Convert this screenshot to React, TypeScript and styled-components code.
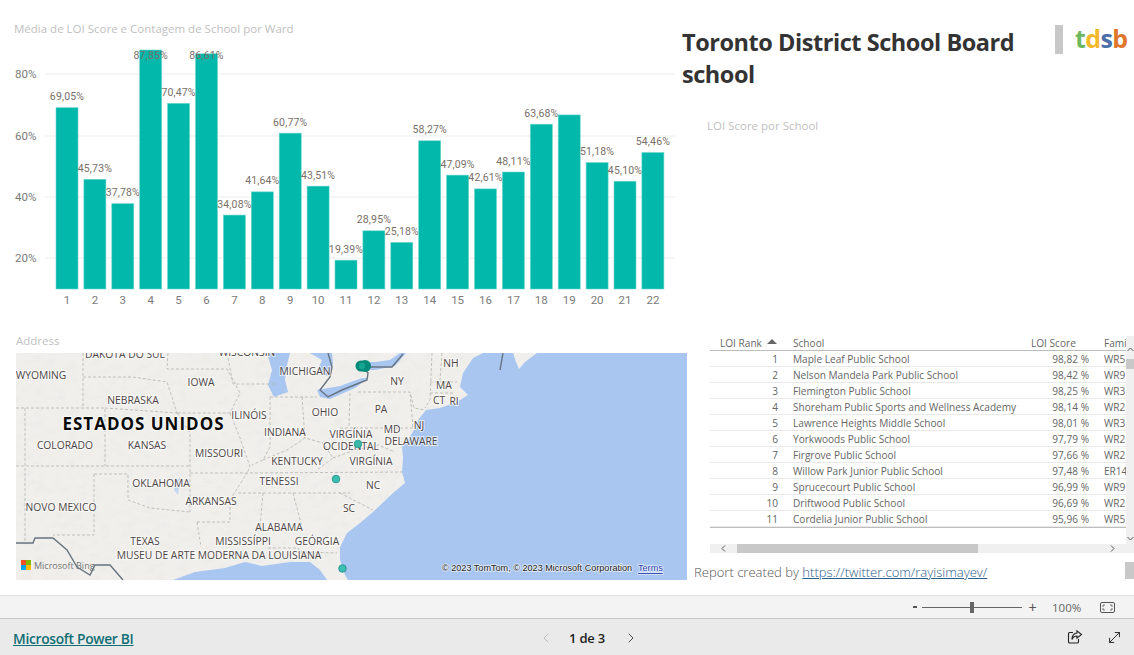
import React from "react";
import styled, { createGlobalStyle } from "styled-components";
import { ChevronLeft, ChevronRight, MoveDiagonal } from "lucide-react";

const Global = createGlobalStyle`
  html, body { margin: 0; padding: 0; background: #fff; overflow: hidden; }
  * { box-sizing: border-box; }
  body { font-family: "Open Sans", "Noto Sans", sans-serif; }
`;

const Page = styled.div`
  width: 1134px; height: 655px; display: flex; flex-direction: column; background: #fff;
`;
const Report = styled.main`height: 595px; display: flex; flex-direction: column;`;
const TopRow = styled.section`height: 330px; display: flex;`;
const BottomRow = styled.section`height: 265px; display: flex;`;
const ChartPanel = styled.div`width: 676px; display: flex; flex-direction: column;`;
const VisualTitle = styled.div<{ $pad: number; $h: number }>`
  height: ${p => p.$h}px; padding-left: ${p => p.$pad}px; display: flex; align-items: flex-end;
  font-size: 11.5px; line-height: 16px; color: #bfbfbf; white-space: nowrap;
`;
const ChartBoxWrap = styled.div`height: 293px; padding-top: 3px;`;
const ChartSvg = styled.svg`display: block; width: 676px; height: 290px;`;
const Grid = styled.line`stroke: #eeeeee; stroke-width: 1.2;`;
const Bar = styled.rect`fill: #01b8aa; stroke: #6ad6cd; stroke-width: .6;`;
const AxisText = styled.text`
  font-family: "Roboto", sans-serif; font-size: 11.5px; fill: #7b7b7b; dominant-baseline: central;
`;
const DataLabel = styled.text`
  font-family: "Roboto", sans-serif; font-size: 10.5px; letter-spacing: .15px; fill: #796f69;
  text-anchor: middle; dominant-baseline: central;
`;

const SidePanel = styled.div`flex: 1; padding-left: 6px; display: flex; flex-direction: column;`;
const Header = styled.div`display: flex; height: 88px; padding-top: 26px;`;
const Title = styled.h1`
  margin: 0; width: 373px; font-size: 23.5px; line-height: 32px; font-weight: 700; color: #333;
  letter-spacing: -.45px;
`;
const Divider = styled.div`width: 8px; height: 29px; margin-top: -1px; background: #c8c8c8;`;
const Logo = styled.div`
  margin-left: 12px; margin-top: -5px; font-size: 25px; line-height: 34px; font-weight: 700; letter-spacing: -.6px;
`;
const LogoLetter = styled.span<{ $c: string }>`color: ${p => p.$c};`;

const MapColumn = styled.div`width: 690px; display: flex; flex-direction: column;`;
const MapGap = styled.div`height: 4px;`;
const MapSvg = styled.svg`display: block; width: 671px; height: 227px; margin-left: 16px;`;
const State = styled.path`fill: none; stroke: #b4b4af; stroke-width: .8; stroke-dasharray: 3 2;`;
const Border = styled.path`fill: none; stroke: #677380; stroke-width: 1.4;`;
const MapLabel = styled.text`
  font-family: "Open Sans", sans-serif; font-size: 10.3px; fill: #4d4545; text-anchor: middle; dominant-baseline: central;
  paint-order: stroke; stroke: rgba(255,255,255,.65); stroke-width: 2px;
`;
const CountryLabel = styled(MapLabel)`
  font-size: 17px; font-weight: 700; fill: #0a0a0a; letter-spacing: 1px; stroke: rgba(255,255,255,.7);
`;
const Attribution = styled.text`
  font-family: "Liberation Sans", sans-serif; font-size: 9.1px; fill: #222; dominant-baseline: central;
  paint-order: stroke; stroke: rgba(255,255,255,.7); stroke-width: 1.5px;
`;
const TermsLabel = styled(Attribution)`fill: #2a3fb0; text-decoration: underline;`;
const BingLabel = styled.text`
  font-family: "Open Sans", sans-serif; font-size: 9px; fill: #777; dominant-baseline: central;
`;

const TableColumn = styled.div`flex: 1; padding-top: 6px; display: flex; flex-direction: column;`;
const TableArea = styled.div`display: flex; height: 217px; padding-left: 20px;`;
const TableBody = styled.div`width: 416px; display: flex; flex-direction: column;`;
const Rows = styled.div`height: 177px; border-bottom: 1px solid #bdbdbd; overflow: hidden;`;
const RowGrid = styled.div<{ $head?: boolean }>`
  display: grid; grid-template-columns: 68px 252px 59px 37px; align-items: center;
  height: ${p => (p.$head ? 15 : 16)}px; padding-top: ${p => (p.$head ? 0 : 1)}px;
  border-bottom: 1px solid ${p => (p.$head ? "#bdbdbd" : "#e9e9e9")};
  font-size: 10.1px; line-height: 14px; color: #666; white-space: nowrap;
`;
const RankCell = styled.div`text-align: right;`;
const RankHead = styled.div`padding-left: 10px; display: flex; align-items: center; gap: 5px;`;
const SortArrow = styled.span`
  display: block; width: 0; height: 0; margin-top: -4px;
  border-left: 5px solid transparent; border-right: 5px solid transparent; border-bottom: 5px solid #666;
`;
const SchoolCell = styled.div`padding-left: 15px; overflow: hidden;`;
const ScoreCell = styled.div`text-align: right;`;
const ScoreHead = styled.div`padding-left: 1px;`;
const FamilyCell = styled.div`padding-left: 15px; overflow: hidden;`;
const HScroll = styled.div`
  margin-top: 16px; height: 9px; background: #f0f0f0; display: flex; align-items: center; color: #555;
`;
const HArrow = styled.div`width: 27px; display: flex; justify-content: center;`;
const HThumb = styled.div`width: 241px; height: 9px; background: #c8c8c8;`;
const HEnd = styled.div`margin-left: auto; width: 27px; display: flex; justify-content: center;`;
const VScroll = styled.div`
  width: 8px; background: #f0f0f0; display: flex; flex-direction: column; align-items: center; color: #555;
  padding-top: 11px;
`;
const VThumb = styled.div`width: 8px; height: 10px; margin-top: 7px; background: #c8c8c8;`;
const VEnd = styled.div`margin-top: 155px;`;
const NoteRow = styled.div`
  margin-top: 9px; height: 20px; padding-left: 4px; display: flex; justify-content: space-between; align-items: flex-start;
`;
const Note = styled.div`font-size: 13.05px; font-weight: 300; line-height: 21px; color: #555;`;
const NoteLink = styled.a`color: #2b5e8c; text-decoration: underline;`;
const NoteBlock = styled.div`width: 9px; height: 17px; background: #c8c8c8;`;

const ZoomBar = styled.div`
  height: 24px; background: #f3f3f3; border-top: 1px solid #e1e1e1; border-bottom: 1px solid #c8c8c8;
  display: flex; align-items: center; justify-content: flex-end; padding-right: 19px; color: #555; font-size: 11.5px;
`;
const ZoomMinus = styled.div`width: 4px; height: 2px; background: #555;`;
const Slider = styled.div`
  width: 100px; height: 1px; margin: 0 6px 0 5px; background: #666; display: flex; align-items: center; justify-content: center;
`;
const SliderThumb = styled.div`width: 4px; height: 11px; background: #666;`;
const ZoomPlus = styled.div`font-size: 14px; line-height: 14px; width: 9px; text-align: center; font-family: "Liberation Sans", sans-serif;`;
const ZoomValue = styled.div`margin-left: 15px; width: 33px; color: #666;`;
const FitIcon = styled.svg`margin-left: 15px; display: block;`;

const Footer = styled.footer`
  height: 36px; background: #eaeaea; display: flex; align-items: center; padding: 2px 11px 0 13px;
`;
const BrandLink = styled.a`
  width: 121px; font-size: 13.8px; font-weight: 600; letter-spacing: -.3px; color: #0f6f75; text-decoration: underline; white-space: nowrap;
`;
const Pager = styled.div`
  margin-left: 404px; margin-top: -1px; display: flex; align-items: center; color: #222; font-size: 13px; font-weight: 600;
  letter-spacing: -.2px;
`;
const PagerText = styled.span`margin: 0 18px 0 15px; white-space: nowrap;`;
const Actions = styled.div`margin-left: auto; margin-top: -2px; display: flex; align-items: center; gap: 23px; color: #222;`;

const values: (number | null)[] = [69.05,45.73,37.78,87.85,70.47,86.61,34.08,41.64,60.77,43.51,19.39,28.95,25.18,58.27,47.09,42.61,48.11,63.68,null,51.18,45.1,54.46];
const heights = values.map(v => (v === null ? 66.7 : v));
const yOf = (v: number) => 289 - (v - 10) * 3.07;
const fmt = (v: number) => v.toFixed(2).replace(".", ",") + "%";

const rows = [
  ["1","Maple Leaf Public School","98,82 %","WR5"],
  ["2","Nelson Mandela Park Public School","98,42 %","WR9"],
  ["3","Flemington Public School","98,25 %","WR3"],
  ["4","Shoreham Public Sports and Wellness Academy","98,14 %","WR2"],
  ["5","Lawrence Heights Middle School","98,01 %","WR3"],
  ["6","Yorkwoods Public School","97,79 %","WR2"],
  ["7","Firgrove Public School","97,66 %","WR2"],
  ["8","Willow Park Junior Public School","97,48 %","ER14"],
  ["9","Sprucecourt Public School","96,99 %","WR9"],
  ["10","Driftwood Public School","96,69 %","WR2"],
  ["11","Cordelia Junior Public School","95,96 %","WR5"],
];

const labels: [string, number, number][] = [
  ["DAKOTA DO SUL",125,354],["WISCONSIN",247,352],["WYOMING",41,375],["IOWA",201,382],["NEBRASKA",133,400],
  ["MICHIGAN",305,371],["OHIO",325,412],["ILINÓIS",249,415],["INDIANA",285,432],["COLORADO",65,445],["KANSAS",147,445],
  ["MISSOURI",219,453],["KENTUCKY",297,461],["VIRGÍNIA",351,434],["OCIDENTAL",351,446],["MD",392,429],["DELAWARE",411,441],
  ["NJ",419,425],["PA",381,409],["NY",397,381],["NH",451,363],["MA",444,385],["CT",439,400],["RI",454,401],
  ["VIRGÍNIA",371,461],["OKLAHOMA",161,483],["TENESSI",279,481],["ARKANSAS",211,501],["NC",373,485],["SC",349,508],
  ["NOVO MEXICO",61,507],["ALABAMA",279,527],["TEXAS",145,541],["MISSISSÍPPI",243,541],["GEÓRGIA",317,541],
  ["MUSEU DE ARTE MODERNA DA LOUISIANA",219,555],
];

const statePaths = [
  "M83 353V407","M83 377H133L167 382L177 413","M16 408H105V466","M105 408L177 413",
  "M168 353L167 369H227L240 393L230 413H177","M177 413L190 433V512","M230 413L240 438L250 467L247 473",
  "M16 466H190","M94 474H128V500L150 508L190 512","M190 473H247L402 472","M25 408V543","M94 474V535H53",
  "M197 522H230V500L247 473","M197 522L201 547","M238 493H350","M263 493L260 527","M293 493L302 527",
  "M270 397V447L263 460L252 465","M302 397L305 438","M227 353L233 384H277","M270 397H317",
  "M263 460L287 450L305 438L323 443L333 458L317 470","M358 392H410L414 408L425 410","M350 393L349 427","M340 428H413",
  "M432 353L430 400L425 408","M430 382H457","M430 393H455","M442 353L440 380","M340 493L373 510",
  "M268 548H298L300 552L337 553","M333 458L355 450L378 445L395 452","M413 427L410 392",
];

const coast = "M16 353H483L473 358L463 373L460 387L468 395L457 402L440 408L426 410L418 420L415 428L408 440L402 447L403 458L402 472L405 483L393 493L373 512L360 523L347 533L340 547L340 560L345 575L348 580H327L320 570L310 562L290 562L262 566L245 562L225 568L195 572L173 580H16Z";

const Chart = () => (
  <ChartSvg viewBox="0 40 676 290">
    {[[80,74],[60,136],[40,197],[20,258]].map(([v, y]) => (
      <React.Fragment key={v}>
        <Grid x1={45} x2={675} y1={y} y2={y} />
        <AxisText x={15} y={y}>{v}%</AxisText>
      </React.Fragment>
    ))}
    {heights.map((h, i) => {
      const x = 56 + i * 27.9;
      const top = yOf(h);
      const v = values[i];
      const inside = top < 70;
      return (
        <React.Fragment key={i}>
          <Bar x={x} y={top} width={22} height={289 - top} />
          {v !== null && <DataLabel x={x + 11} y={inside ? 55 : top - 11}>{fmt(v)}</DataLabel>}
          <AxisText x={x + 11} y={300} textAnchor="middle">{i + 1}</AxisText>
        </React.Fragment>
      );
    })}
  </ChartSvg>
);

const USMap = () => (
  <MapSvg viewBox="16 353 671 227">
    <defs>
      <filter id="terrain" x="0" y="0" width="100%" height="100%">
        <feTurbulence type="fractalNoise" baseFrequency="0.09 0.14" numOctaves="3" seed="4" />
        <feColorMatrix values="0 0 0 0 .6  0 0 0 0 .6  0 0 0 0 .58  .9 0 0 0 -.42" />
      </filter>
      <clipPath id="land"><path d={coast} /></clipPath>
    </defs>
    <rect x="16" y="353" width="671" height="227" fill="#a9c6f0" />
    <path fill="#f0efec" d={coast} />
    <g clipPath="url(#land)"><rect x="16" y="353" width="500" height="227" filter="url(#terrain)" opacity=".22" /></g>
    <path fill="#f0efec" d="M513 353H537L525 362L519 369L516 362Z" />
    <path fill="#f0efec" d="M428 408L445 401L450 398L440 405Z" />
    <path fill="#a9c6f0" d="M267 353H290L287 365L285 380L288 392L274 397L268 385L272 370Z" />
    <path fill="#a9c6f0" d="M310 353H332L333 364L327 376L318 370L322 360Z" />
    <path fill="#a9c6f0" d="M317 390L340 386L362 378L368 378L355 388L330 399L320 397Z" />
    <path fill="#a9c6f0" d="M358 362L375 362L390 360L400 353H406L395 366L375 370L358 370Z" />
    <path fill="#a9c6f0" d="M175 480L180 478L178 495L174 490Z" opacity=".6" />
    {statePaths.map(d => <State key={d} d={d} />)}
    <Border d="M328 353L332 367L330 377L320 390L328 397L342 390L367 380L368 373L363 367H392L403 354" />
    <Border d="M503 353L500 370" />
    <Border d="M16 543H33L35 538H53L67 550L77 567L90 575L95 565H110L123 580" />
    {labels.map(([t, x, y], i) => <MapLabel key={i} x={x} y={y}>{t}</MapLabel>)}
    <CountryLabel x={143.5} y={423}>ESTADOS UNIDOS</CountryLabel>
    <circle cx="361" cy="366" r="5.5" fill="#008a77" />
    <circle cx="365" cy="366" r="6" fill="#008a77" />
    <circle cx="362" cy="366" r="3.2" fill="#15a693" />
    <circle cx="358" cy="444" r="3.8" fill="#3cb7a9" stroke="#1f9c8d" strokeWidth=".8" />
    <circle cx="336" cy="479" r="3.8" fill="#3cbfb2" stroke="#1a8f85" strokeWidth=".8" />
    <circle cx="342.500" cy="568.500" r="3.8" fill="#3cbfb2" stroke="#1a8f85" strokeWidth=".8" />
    <rect x="21" y="560" width="5" height="5" fill="#f25022" />
    <rect x="26" y="560" width="5" height="5" fill="#7fba00" />
    <rect x="21" y="565" width="5" height="5" fill="#00a4ef" />
    <rect x="26" y="565" width="5" height="5" fill="#ffb900" />
    <BingLabel x={34} y={565}>Microsoft Bing</BingLabel>
    <Attribution x={442} y={568}>© 2023 TomTom, © 2023 Microsoft Corporation</Attribution>
    <TermsLabel x={638} y={568}>Terms</TermsLabel>
  </MapSvg>
);

const TinyUp = () => <svg width="7" height="5" viewBox="0 0 7 5"><path d="M.5 4L3.500 1L6.500 4" fill="none" stroke="currentColor" /></svg>;
const TinyDown = () => <svg width="7" height="5" viewBox="0 0 7 5"><path d="M.5 1L3.500 4L6.500 1" fill="none" stroke="currentColor" /></svg>;
const TinyLeft = () => <svg width="5" height="7" viewBox="0 0 5 7"><path d="M4 .5L1 3.500L4 6.500" fill="none" stroke="currentColor" /></svg>;
const TinyRight = () => <svg width="5" height="7" viewBox="0 0 5 7"><path d="M1 .5L4 3.500L1 6.500" fill="none" stroke="currentColor" /></svg>;

const ShareIcon = () => (
  <svg width="16" height="16" viewBox="0 0 16 16" fill="none" stroke="currentColor" strokeWidth="1.1">
    <path d="M6 3.500H2.800Q1.500 3.500 1.500 4.800V12.700Q1.500 14 2.800 14H10.200Q11.500 14 11.500 12.700V10" />
    <path d="M10 1.800L14.500 5.500L10 9.200V7C7.500 7 6 8 5 10.500C5 6.800 7 4 10 4Z" />
  </svg>
);

export default function App() {
  return (
    <Page>
      <Global />
      <Report>
        <TopRow>
          <ChartPanel>
            <VisualTitle $pad={14} $h={37}>Média de LOI Score e Contagem de School por Ward</VisualTitle>
            <ChartBoxWrap><Chart /></ChartBoxWrap>
          </ChartPanel>
          <SidePanel>
            <Header>
              <Title>Toronto District School Board school</Title>
              <Divider />
              <Logo>
                <LogoLetter $c="#6cb85f">t</LogoLetter>
                <LogoLetter $c="#f2b92c">d</LogoLetter>
                <LogoLetter $c="#4a6ea8">s</LogoLetter>
                <LogoLetter $c="#e0762a">b</LogoLetter>
              </Logo>
            </Header>
            <VisualTitle $pad={25} $h={46}>LOI Score por School</VisualTitle>
          </SidePanel>
        </TopRow>
        <BottomRow>
          <MapColumn>
            <VisualTitle $pad={16} $h={19}>Address</VisualTitle>
            <MapGap />
            <USMap />
          </MapColumn>
          <TableColumn>
            <TableArea>
              <TableBody>
                <RowGrid $head>
                  <RankHead>LOI Rank <SortArrow /></RankHead>
                  <SchoolCell>School</SchoolCell>
                  <ScoreHead>LOI Score</ScoreHead>
                  <FamilyCell>Family</FamilyCell>
                </RowGrid>
                <Rows>
                  {rows.map(r => (
                    <RowGrid key={r[0]}>
                      <RankCell>{r[0]}</RankCell>
                      <SchoolCell>{r[1]}</SchoolCell>
                      <ScoreCell>{r[2]}</ScoreCell>
                      <FamilyCell>{r[3]}</FamilyCell>
                    </RowGrid>
                  ))}
                </Rows>
                <HScroll>
                  <HArrow><TinyLeft /></HArrow>
                  <HThumb />
                  <HEnd><TinyRight /></HEnd>
                </HScroll>
              </TableBody>
              <VScroll>
                <TinyUp />
                <VThumb />
                <VEnd><TinyDown /></VEnd>
              </VScroll>
            </TableArea>
            <NoteRow>
              <Note>Report created by <NoteLink href="#">https://twitter.com/rayisimayev/</NoteLink></Note>
              <NoteBlock />
            </NoteRow>
          </TableColumn>
        </BottomRow>
      </Report>
      <ZoomBar>
        <ZoomMinus />
        <Slider><SliderThumb /></Slider>
        <ZoomPlus>+</ZoomPlus>
        <ZoomValue>100%</ZoomValue>
        <FitIcon width="15" height="11" viewBox="0 0 15 11" fill="none" stroke="#555">
          <rect x=".5" y=".5" width="14" height="10" rx="1.500" />
          <path d="M5 3H3V5M10 3H12V5M5 8H3V6M10 8H12V6" strokeWidth=".8" />
        </FitIcon>
      </ZoomBar>
      <Footer>
        <BrandLink href="#">Microsoft Power BI</BrandLink>
        <Pager>
          <ChevronLeft size={16} strokeWidth={1.3} color="#b5b5b5" />
          <PagerText>1 de 3</PagerText>
          <ChevronRight size={16} strokeWidth={1.3} color="#333" />
        </Pager>
        <Actions>
          <ShareIcon />
          <MoveDiagonal size={17} strokeWidth={1.3} />
        </Actions>
      </Footer>
    </Page>
  );
}
